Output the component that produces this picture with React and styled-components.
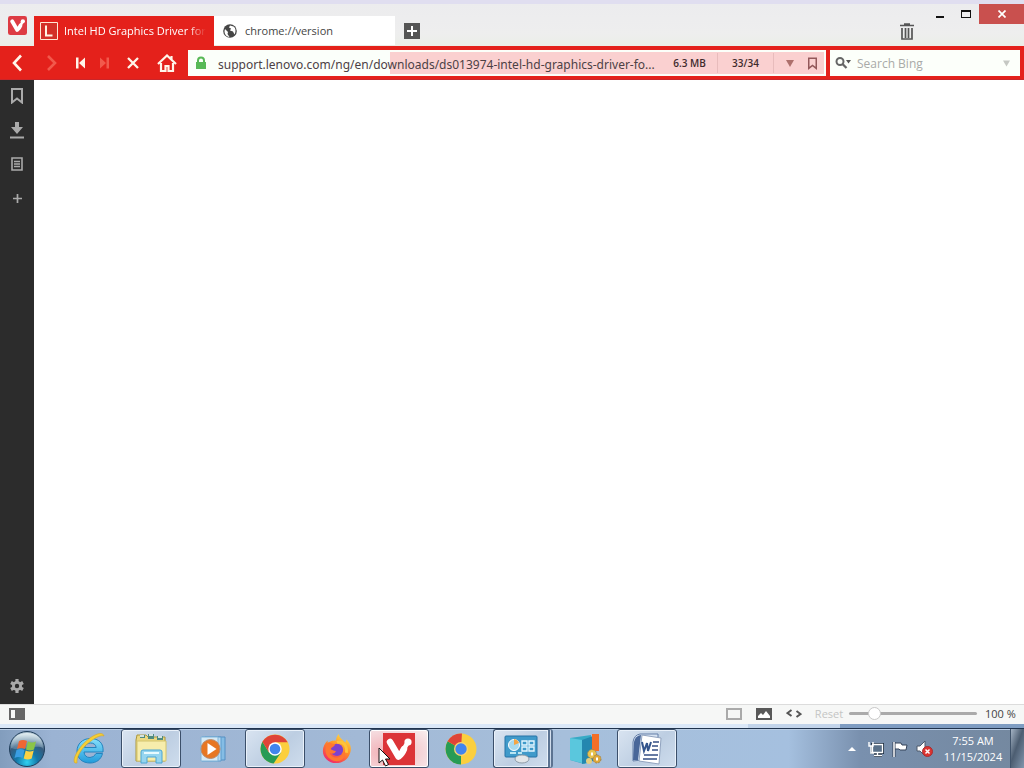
import React from "react";
import styled, { createGlobalStyle, css } from "styled-components";

const RED = "#e4211b";

const GlobalStyle = createGlobalStyle`
  *, *::before, *::after { box-sizing: border-box; }
  body { margin: 0; font-family: "Open Sans", "Noto Sans", sans-serif; font-size: 12px; color: #333; }
  button, input { font: inherit; color: inherit; }
  button { border: 0; padding: 0; background: none; display: flex; align-items: center; justify-content: center; }
  svg { display: block; flex: none; }
`;

const Desktop = styled.div`
  display: flex;
  flex-direction: column;
  min-height: 100vh;
  background: #fff;
`;

const Header = styled.header`
  display: flex;
  height: 46px;
  border-top: 4px solid #e0def0;
  background: linear-gradient(#ececee, #eeeeee 70%, #ebeee8);
`;

const MenuButton = styled.button`
  width: 34px;
  height: 42px;
`;

const TabStrip = styled.div`
  display: flex;
  flex: 1;
  min-width: 0;
  padding-top: 12px;
`;

const Tab = styled.button`
  width: ${(p) => (p.$active ? 180 : 181)}px;
  height: ${(p) => (p.$active ? 30 : 29)}px;
  padding: 0 8px 0 ${(p) => (p.$active ? 6 : 9)}px;
  justify-content: flex-start;
  gap: ${(p) => (p.$active ? 6 : 8)}px;
  background: ${(p) => (p.$active ? RED : "#fff")};
  color: ${(p) => (p.$active ? "#fff" : "#444")};
`;

const TabTitle = styled.span`
  flex: 1;
  overflow: hidden;
  white-space: nowrap;
  text-align: left;
  font-size: 11px;
  line-height: 20px;
  ${(p) => p.$fade && css`
    font-weight: 500;
    mask-image: linear-gradient(90deg, #000 88%, transparent);
  `}
`;

const NewTab = styled.button`
  width: 34px;
  height: 30px;
`;

const WindowArea = styled.div`
  display: flex;
  align-items: flex-start;
`;

const TrashButton = styled.button`
  width: 32px;
  height: 30px;
  margin: 12px 4px 0 0;
`;

const WindowButton = styled.button`
  width: ${(p) => (p.$close ? 45 : 26)}px;
  height: 20px;
  background: ${(p) => (p.$close ? "#c9504e" : "transparent")};
`;

const AddressBar = styled.div`
  display: flex;
  height: 34px;
  padding: 4px 4px 4px 0;
  background: ${RED};
  box-shadow: inset 0 -1px #c9262a;
`;

const NavButton = styled.button`
  width: ${(p) => (p.$small ? 24 : 34)}px;
  height: 26px;
  color: ${(p) => (p.disabled ? "#f2594c" : "#fff5ea")};
`;

const UrlField = styled.div`
  position: relative;
  display: flex;
  flex: 1;
  align-items: center;
  min-width: 0;
  margin: 0 4px;
  padding: 0 3px 0 6px;
  background: #fbfffa;
`;

const LoadProgress = styled.div`
  position: absolute;
  top: 2px;
  right: 2px;
  bottom: 2px;
  background: #fad0d0;
`;

const FieldPart = styled.div`
  position: relative;
  display: flex;
  align-items: center;
  justify-content: center;
  width: ${(p) => p.$width}px;
  height: 20px;
  flex: none;
  font-size: 10px;
  font-weight: 600;
  color: #402a2c;
  border-left: 1px solid ${(p) => (p.$divided ? "#e8bcbc" : "transparent")};
`;

const UrlInput = styled.input`
  position: relative;
  flex: 1;
  min-width: 0;
  height: 26px;
  border: 0;
  padding: 2px 0 0 10px;
  background: transparent;
  font-family: "Noto Sans", sans-serif;
  font-size: 12px;
  color: #4c4145;
  outline: 0;
`;

const FieldButton = styled.button`
  position: relative;
  width: 22px;
  height: 26px;
  flex: none;
  color: #93585a;
`;

const SearchField = styled.div`
  display: flex;
  align-items: center;
  width: 190px;
  padding: 0 3px;
  background: #fcfffa;
`;

const SearchInput = styled.input`
  flex: 1;
  min-width: 0;
  height: 26px;
  border: 0;
  padding: 0 3px;
  background: transparent;
  outline: 0;
  &::placeholder { color: #a9aaa8; opacity: 1; }
`;

const Body = styled.div`
  display: flex;
  flex: 1;
`;

const SidePanel = styled.nav`
  display: flex;
  flex-direction: column;
  width: 34px;
  background: #2c2c2c;
  color: #aaa;
`;

const PanelButton = styled.button`
  width: 34px;
  height: 34px;
  padding-bottom: 2px;
  color: inherit;
  ${(p) => p.$last && css`margin-top: auto;`}
`;

const Page = styled.main`
  flex: 1;
  background: #fff;
`;

const StatusBar = styled.footer`
  display: flex;
  align-items: center;
  height: 20px;
  padding: 0 7px 2px 9px;
  border-top: 1px solid #dcdcdc;
  background: #f6f7f6;
  color: #666;
`;

const StatusGroup = styled.div`
  display: flex;
  align-items: center;
  gap: 14px;
  margin-left: auto;
`;

const ResetButton = styled.button`
  width: 28px;
  margin-left: 13px;
  font-size: 11px;
  color: #c4c5c4;
`;

const Zoom = styled.input`
  appearance: none;
  width: 128px;
  height: 14px;
  margin: 0 8px 0 6px;
  background: transparent;
  &::-webkit-slider-runnable-track { height: 3px; border-radius: 2px; background: #aaa; }
  &::-webkit-slider-thumb {
    appearance: none;
    width: 13px;
    height: 13px;
    margin-top: -5px;
    border: 1px solid #c8c8c8;
    border-radius: 50%;
    background: #fff;
  }
`;

const ZoomValue = styled.output`
  width: 32px;
  font-size: 11px;
  white-space: nowrap;
  color: #444;
`;

const WindowEdge = styled.div`
  height: 4px;
  background: linear-gradient(90deg, #dbe8f8 0 73%, #c2d4ea 73% 82%, #7f9dc2 82%);
`;

const Taskbar = styled.div`
  display: flex;
  height: 40px;
  border-top: 1px solid #20344e;
  background: linear-gradient(90deg, #829dbd, #9bb3d3 5%, #a2b9d6 35%, #a6bfdb 55%, #a5c0df 77%, #7990ae 84%, #74889f);
  box-shadow: inset 0 1px #b9cde4;
`;

const StartButton = styled.button`
  width: 54px;
  height: 39px;
`;

const TaskList = styled.div`
  display: flex;
  flex: 1;
  gap: 2px;
  padding-left: 5px;
`;

const openTask = css`
  border: 1px solid #3b4f6a;
  border-radius: 3px;
  background: linear-gradient(135deg, #d9e4f1, #bdcee2 55%, #cfdded);
  box-shadow: inset 0 0 0 1px #e9f1fa;
`;

const TaskButton = styled.button`
  position: relative;
  width: 60px;
  height: 39px;
  ${(p) => p.$open && openTask}
  ${(p) => p.$current && css`
    background: radial-gradient(ellipse at 30% 60%, #f2aeb4, #f5dcdf 70%, #faf0f0);
    box-shadow: inset 0 0 0 1px #fff;
  `}
  ${(p) => p.$stacked && css`
    border-right: 5px double #5b7391;
  `}
`;

const Cursor = styled.svg`
  position: absolute;
  left: 8px;
  top: 17px;
`;

const Tray = styled.div`
  display: flex;
  align-items: center;
`;

const TrayButton = styled.button`
  width: 24px;
  height: 39px;
`;

const Clock = styled.time`
  width: 74px;
  text-align: center;
  font-size: 11px;
  line-height: 16px;
  color: #fff;
`;

const ShowDesktop = styled.button`
  width: 14px;
  height: 39px;
  border-left: 1px solid #40536a;
  background: linear-gradient(110deg, #a5b4c5, #4c5d71 45%, #8296ad);
`;

const VivaldiMark = ({ size, square }) => (
  <svg width={size} height={size} viewBox="0 0 32 32">
    <rect width="32" height="32" rx={square ? 0 : 4} fill={square ? "#dc3438" : "#dd3b43"} />
    <path d="M7 9 L15.5 23.5 Q19 21 21 16" fill="none" stroke="#fff" strokeWidth="6.5" strokeLinecap="round" strokeLinejoin="round" />
    <path d="M21 16 Q22.5 13 25 9" fill="none" stroke="#fff" strokeWidth="4.5" />
    <circle cx="25" cy="9" r="3.6" fill="#fff" />
  </svg>
);

const Triangle = ({ color, width = 8 }) => (
  <svg width={width} height="7" viewBox="0 0 8 7"><path d="M0 0h8L4 7z" fill={color} /></svg>
);

const BookmarkIcon = ({ width = 12, height = 16 }) => (
  <svg width={width} height={height} viewBox="0 0 12 16">
    <path d="M1 1h10v13.5L6 10.5 1 14.5z" fill="none" stroke="currentColor" strokeWidth="2" />
  </svg>
);

const SkipIcon = ({ forward }) => (
  <svg width="9" height="12" viewBox="0 0 9 12">
    <path d={forward ? "M0 0.5L6 6 0 11.5zM6.5 0.5H9v11H6.5z" : "M9 0.5L3 6l6 5.5zM0 0.5h2.5v11H0z"} fill="currentColor" />
  </svg>
);

const ChevronIcon = ({ forward }) => (
  <svg width="11" height="18" viewBox="0 0 11 18">
    <path d={forward ? "M2 2l7 7-7 7" : "M9 1.5L2 9l7 7.5"} fill="none" stroke="currentColor" strokeWidth="2.6" />
  </svg>
);

const StartOrb = () => (
  <svg width="38" height="38" viewBox="0 0 38 38">
    <defs>
      <radialGradient id="orb" cx="50%" cy="88%" r="80%">
        <stop offset="0" stopColor="#31d1f1" /><stop offset=".38" stopColor="#1378a9" />
        <stop offset=".72" stopColor="#375b7d" /><stop offset="1" stopColor="#a8bdcc" />
      </radialGradient>
      <linearGradient id="orbShine" x2="0" y2="1">
        <stop offset="0" stopColor="#e9f3f5" stopOpacity=".9" /><stop offset="1" stopColor="#9abacd" stopOpacity=".3" />
      </linearGradient>
    </defs>
    <circle cx="19" cy="19" r="17.5" fill="url(#orb)" stroke="#203e5b" />
    <path d="M3 18C3 8 10 3 19 3s16 5 16 15c-9-4-21 4-32 0z" fill="url(#orbShine)" />
    <path d="M11 11q4-2 8 0l-2 8q-4-2-8 0z" fill="#ef6634" />
    <path d="M20 11.5q4 2 8 0l-2 8q-4 2-8 0z" fill="#8bc548" />
    <path d="M8.5 20q4-2 8 0l-2 8q-4-2-8 0z" fill="#3a9ee2" />
    <path d="M17.7 20.5q4 2 8 0l-2 8q-4 2-8 0z" fill="#fbd144" />
  </svg>
);

const ExplorerE = () => (
  <svg width="34" height="34" viewBox="0 0 34 34">
    <defs><linearGradient id="ie" x2="0" y2="1"><stop stopColor="#86e0fb" /><stop offset="1" stopColor="#219bdb" /></linearGradient></defs>
    <path d="M30.500 21.500H24q-2 4-6 4-5.500 0-6-5.500h19C32 11 26.500 6.500 18.500 6.500 10.500 6.500 5 12 5 19c0 7.500 5.500 12 13 12 6.500 0 11-3.500 12.500-9.500zM12.500 15.500c.7-3 3-4.500 6-4.500 3.200 0 5.200 1.500 5.700 4.500z" fill="url(#ie)" stroke="#2384bf" />
    <path d="M3 31C-1 27 9 12 18 6c7-5 13-6 14-2-3-1-8 1-13 5C10 15 4 25 5 31z" fill="#f5cf35" stroke="#d7a425" strokeWidth=".6" />
  </svg>
);

const FolderIcon = () => (
  <svg width="34" height="34" viewBox="0 0 34 34">
    <path d="M2 8l1-5h9l2 2h17v24H2z" fill="#ebd982" stroke="#aa963f" />
    <path d="M6 3h5v3H6zm8-1h6v5h-6zm9 2h6v4h-6z" fill="#4f8b80" />
    <path d="M6 4h4m5-1h4m5 2h4" stroke="#fff" strokeWidth="1.5" />
    <path d="M3 9h29v20H3z" fill="#f7edac" stroke="#d4c46c" />
    <path d="M7 31V20q0-2 2-2h17q2 0 2 2v11h-6v-6h-9v6z" fill="#95d5ef" stroke="#4aa5d4" />
    <path d="M10 21h15" stroke="#e7faff" strokeWidth="2" />
  </svg>
);

const MediaIcon = () => (
  <svg width="34" height="30" viewBox="0 0 34 30">
    <path d="M9 3h20v23H9z" fill="#85bde5" stroke="#548fc3" />
    <path d="M6 3h19v24H6z" fill="#b8daf1" stroke="#5d9bcc" />
    <path d="M5 3h17v24H5z" fill="#d5eaf6" stroke="#82b5d9" />
    <circle cx="14.5" cy="15" r="9.5" fill="#e77723" stroke="#b98b6e" />
    <path d="M11.5 9l9 6-9 6z" fill="#fff" />
  </svg>
);

const ChromeIcon = () => (
  <svg width="30" height="30" viewBox="0 0 32 32">
    <circle cx="16" cy="16" r="15.500" fill="#fbcf3e" />
    <path d="M2.600 8.300A15.500 15.500 0 0 0 14.500 31.400L22.500 19.500 9.500 19.500z" fill="#279b55" />
    <path d="M16 16L9.500 19.500 2.600 8.300A15.500 15.500 0 0 1 29.500 8.700H16z" fill="#df4438" />
    <circle cx="16" cy="16" r="7.2" fill="#fff" />
    <circle cx="16" cy="16" r="5.7" fill="#4285ee" />
  </svg>
);

const CanaryIcon = () => (
  <svg width="32" height="32" viewBox="0 0 32 32">
    <circle cx="16" cy="16" r="15.500" fill="#fbcf3e" />
    <path d="M16 16V31.500A15.500 15.500 0 0 1 2.600 8.300z" fill="#279b55" />
    <path d="M16 16L2.600 8.300A15.500 15.500 0 0 1 17 .5z" fill="#df4438" />
    <circle cx="16" cy="16" r="7" fill="#fbd56b" />
    <circle cx="16" cy="16" r="5.700" fill="#4285ee" />
  </svg>
);

const FirefoxIcon = () => (
  <svg width="32" height="32" viewBox="0 0 34 34">
    <defs><linearGradient id="fox" x1=".8" y1="0" x2=".25" y2="1"><stop stopColor="#ffe34a" /><stop offset=".48" stopColor="#ff8b24" /><stop offset="1" stopColor="#f1266c" /></linearGradient></defs>
    <path d="M19 1c0 4 4 6 7 9l1-3c4 4 6 9 4 14-2 7-8 11-15 11C8 32 2 26 2 19c0-4 2-8 5-11v3c3-3 7-3 9-3 0-3 1-5 3-7z" fill="url(#fox)" />
    <circle cx="17" cy="18" r="6.5" fill="#7d42ce" />
    <path d="M7 10c4 0 5 2 8 2-1 3-4 3-5 5 2 1 3 2 6 2-2 4-5 3-7 2 3 8 15 6 16-3 3 10-7 15-15 10C3 23 4 15 7 10z" fill="#ff7730" />
    <path d="M17 10c7-2 11 4 10 11" fill="none" stroke="#ffc43a" strokeWidth="3" />
  </svg>
);

const ControlPanelIcon = () => (
  <svg width="34" height="32" viewBox="0 0 34 32">
    <rect x="1" y="3" width="32" height="21" rx="1" fill="#3f9aca" stroke="#2672a6" />
    <circle cx="10" cy="12" r="5.5" fill="#a7d9ed" stroke="#fff" />
    <path d="M10 12V6a6 6 0 0 1 5 4z" fill="#f4a543" />
    <path d="M18 8h5v4h-5zm7 0h5v4h-5zm-7 6h5v4h-5zm7 0h5v4h-5z" fill="none" stroke="#e3f6ff" strokeWidth="1.4" />
    <path d="M6 20h6m2 0h4" stroke="#b9e5f3" strokeWidth="2" />
    <ellipse cx="18" cy="26" rx="7" ry="4" fill="#e3e6e9" stroke="#8f9ca8" />
  </svg>
);

const ProgramsIcon = () => (
  <svg width="34" height="32" viewBox="0 0 34 32">
    <path d="M2 5l21-3v27l-7 2L2 27z" fill="#38aac5" />
    <path d="M2 5l12 2v23L2 27z" fill="#5ac7dd" />
    <path d="M14 7l11-4v25l-11 3z" fill="#2487af" />
    <path d="M24 1h7v17h-7z" fill="#f36f27" />
    <circle cx="24" cy="21" r="4.5" fill="#e9c34d" stroke="#8f8458" strokeDasharray="2 1" />
    <circle cx="29" cy="26" r="4" fill="#dfa737" stroke="#9e8654" strokeDasharray="2 1" />
    <circle cx="21" cy="28" r="3" fill="#e3ce80" />
    <path d="M23 21h2m3 5h2" stroke="#fff" strokeWidth="3" />
  </svg>
);

const WordIcon = () => (
  <svg width="34" height="34" viewBox="0 0 34 34">
    <path d="M3 10Q4 3 10 2h18v24L3 29z" fill="#d8e4f3" stroke="#657fa8" />
    <path d="M4 10Q5 4 11 3L8 28H3z" fill="#496799" />
    <path d="M12 3l19 3-2 26-20-3z" fill="#fff" stroke="#91a3bf" />
    <path d="M12 10l2 9 3-8 1 8 3-9" fill="none" stroke="#33548c" strokeWidth="2" />
    <path d="M23 10h6m-7 4h6m-6 4h6m-14 5h14m-15 4h14" stroke="#344f84" strokeWidth="1.7" />
  </svg>
);

const TASKS = [
  { name: "Internet Explorer", icon: <ExplorerE /> },
  { name: "Windows Explorer", icon: <FolderIcon />, open: true },
  { name: "Media Player", icon: <MediaIcon /> },
  { name: "Chrome", icon: <ChromeIcon />, open: true },
  { name: "Firefox", icon: <FirefoxIcon /> },
  { name: "Vivaldi", icon: <VivaldiMark size={32} square />, open: true, current: true },
  { name: "Chrome Canary", icon: <CanaryIcon /> },
  { name: "Control Panel", icon: <ControlPanelIcon />, open: true, stacked: true },
  { name: "Programs", icon: <ProgramsIcon /> },
  { name: "Word", icon: <WordIcon />, open: true },
];

export default function App() {
  return (
    <Desktop>
      <GlobalStyle />
      <Header>
        <MenuButton aria-label="Vivaldi menu"><VivaldiMark size={19} /></MenuButton>
        <TabStrip>
          <Tab $active>
            <svg width="18" height="18" viewBox="0 0 18 18">
              <path d="M.5.5h17v17H.5z" fill="#d33128" stroke="#ffe8d4" />
              <path d="M6 3.5v10h6.5" fill="none" stroke="#fff5e4" strokeWidth="2" />
            </svg>
            <TabTitle $fade>Intel HD Graphics Driver for</TabTitle>
          </Tab>
          <Tab>
            <svg width="14" height="14" viewBox="0 0 14 14">
              <circle cx="7" cy="7" r="6.8" fill="#454545" />
              <path d="M2 5l3 3-.5 2 2 3C3 12.500 1.500 10 1.500 7zM7 1.500L6 3.500l2 1-1 2 3 1 1.500 3C13 8 13 4 10.500 2.500z" fill="#fff" />
            </svg>
            <TabTitle>chrome://version</TabTitle>
          </Tab>
          <NewTab aria-label="New tab">
            <svg width="16" height="16" viewBox="0 0 16 16"><path d="M0 0h16v16H0z" fill="#555" /><path d="M8 3v10M3 8h10" stroke="#fff" strokeWidth="2" /></svg>
          </NewTab>
        </TabStrip>
        <WindowArea>
          <TrashButton aria-label="Closed tabs">
            <svg width="14" height="17" viewBox="0 0 14 17">
              <path d="M0 2.500h14M4 1h6M2 5v11h10V5M5.500 5v10M8.500 5v10" fill="none" stroke="#555" strokeWidth="1.700" />
            </svg>
          </TrashButton>
          <WindowButton aria-label="Minimize"><svg width="8" height="12"><path d="M0 8h8v2H0z" fill="#111" /></svg></WindowButton>
          <WindowButton aria-label="Maximize"><svg width="10" height="8"><path d="M0 0h10v8H0zM1 2v5h8V2z" fill="#111" fillRule="evenodd" /></svg></WindowButton>
          <WindowButton $close aria-label="Close"><svg width="8" height="8" viewBox="0 0 8 8"><path d="M.5.5l7 7m0-7l-7 7" stroke="#fff" strokeWidth="1.700" /></svg></WindowButton>
        </WindowArea>
      </Header>

      <AddressBar>
        <NavButton aria-label="Back"><ChevronIcon /></NavButton>
        <NavButton aria-label="Forward" disabled><ChevronIcon forward /></NavButton>
        <NavButton $small aria-label="Rewind"><SkipIcon /></NavButton>
        <NavButton $small aria-label="Fast forward" disabled><SkipIcon forward /></NavButton>
        <NavButton aria-label="Stop"><svg width="12" height="12" viewBox="0 0 12 12"><path d="M1 1l10 10m0-10L1 11" stroke="currentColor" strokeWidth="2.300" /></svg></NavButton>
        <NavButton aria-label="Home">
          <svg width="20" height="18" viewBox="0 0 20 18">
            <path d="M1 10l9-8.500 9 8.500M14.500 2v4" fill="none" stroke="currentColor" strokeWidth="2.200" />
            <path d="M4 9v8h4.500v-5h3v5H16V9" fill="none" stroke="currentColor" strokeWidth="2.200" />
          </svg>
        </NavButton>
        <UrlField>
          <LoadProgress style={{ width: "68%" }} />
          <svg width="14" height="14" viewBox="0 0 14 14">
            <path d="M2 6h10v7H2z" fill="#58b957" /><path d="M4 6V4.500a3 3 0 0 1 6 0V6" fill="none" stroke="#58b957" strokeWidth="2" />
          </svg>
          <UrlInput aria-label="Address" defaultValue="support.lenovo.com/ng/en/downloads/ds013974-intel-hd-graphics-driver-fo..." />
          <FieldPart $width={56}>6.3 MB</FieldPart>
          <FieldPart $width={56} $divided>33/34</FieldPart>
          <FieldPart $width={6} $divided />
          <FieldButton aria-label="Address history"><Triangle color="#ae706c" /></FieldButton>
          <FieldButton aria-label="Bookmark page"><BookmarkIcon width={9} height={13} /></FieldButton>
        </UrlField>
        <SearchField>
          <svg width="21" height="14" viewBox="0 0 21 14">
            <circle cx="7" cy="5.500" r="3.500" fill="none" stroke="#666" strokeWidth="2" /><path d="M9.500 8l4 4" stroke="#666" strokeWidth="2.300" /><path d="M13 4h5l-2.500 3.500z" fill="#555" />
          </svg>
          <SearchInput aria-label="Search" placeholder="Search Bing" />
          <FieldButton aria-label="Search history"><Triangle color="#c5c8c3" width={7} /></FieldButton>
        </SearchField>
      </AddressBar>

      <Body>
        <SidePanel aria-label="Panels">
          <PanelButton aria-label="Bookmarks"><BookmarkIcon /></PanelButton>
          <PanelButton aria-label="Downloads"><svg width="14" height="17" viewBox="0 0 14 17"><path d="M5 0h4v5h4l-6 7-6-7h4zM0 14.500h14v2H0z" fill="currentColor" /></svg></PanelButton>
          <PanelButton aria-label="Notes"><svg width="12" height="14" viewBox="0 0 12 14"><path d="M1 1h10v12H1zM3 4.500h6M3 7h6M3 9.500h6" fill="none" stroke="currentColor" strokeWidth="1.600" /></svg></PanelButton>
          <PanelButton aria-label="Add panel"><svg width="9" height="9" viewBox="0 0 9 9"><path d="M4.500 0v9M0 4.500h9" stroke="currentColor" strokeWidth="1.700" /></svg></PanelButton>
          <PanelButton $last aria-label="Settings">
            <svg width="14" height="14" viewBox="0 0 14 14">
              <g stroke="currentColor" strokeWidth="3.200"><path d="M7 0v14M1 3.500l12 7M1 10.500l12-7" /></g>
              <circle cx="7" cy="7" r="5" fill="currentColor" /><circle cx="7" cy="7" r="2.200" fill="#2c2c2c" />
            </svg>
          </PanelButton>
        </SidePanel>
        <Page />
      </Body>

      <StatusBar>
        <button aria-label="Toggle panel"><svg width="16" height="12"><path d="M0 0h16v12H0zM2 2v8h4V2z" fill="#666" fillRule="evenodd" /></svg></button>
        <StatusGroup>
          <button aria-label="Tile pages"><svg width="16" height="12"><path d="M1 1h14v10H1z" fill="none" stroke="#aaa" strokeWidth="2" /></svg></button>
          <button aria-label="Show images"><svg width="16" height="12"><path d="M0 0h16v12H0z" fill="#595959" /><path d="M2 10V8l3-3 2 2 3-4 4 5v2z" fill="#fff" /></svg></button>
          <button aria-label="Page actions"><svg width="16" height="10" viewBox="0 0 16 10"><path d="M5.500 1L1.500 4l4 3M10.500 2l4 3-4 3" fill="none" stroke="#555" strokeWidth="2" /></svg></button>
        </StatusGroup>
        <ResetButton>Reset</ResetButton>
        <Zoom type="range" aria-label="Page zoom" min="20" max="500" defaultValue="100" />
        <ZoomValue>100 %</ZoomValue>
      </StatusBar>
      <WindowEdge />

      <Taskbar>
        <StartButton aria-label="Start"><StartOrb /></StartButton>
        <TaskList>
          {TASKS.map((t) => (
            <TaskButton key={t.name} aria-label={t.name} $open={t.open} $current={t.current} $stacked={t.stacked}>
              {t.icon}
              {t.current && (
                <Cursor width="14" height="20" viewBox="0 0 14 20">
                  <path d="M1 1v15l3.500-3 3 6 3-1.500-3-5.500H12z" fill="#fff" stroke="#111" />
                </Cursor>
              )}
            </TaskButton>
          ))}
        </TaskList>
        <Tray>
          <TrayButton aria-label="Show hidden icons"><svg width="8" height="4"><path d="M0 4l4-4 4 4z" fill="#fff" /></svg></TrayButton>
          <TrayButton aria-label="Network">
            <svg width="16" height="16" viewBox="0 0 16 16">
              <path d="M4.500 3.500h10v8h-10zM9.500 11.500v3M6 14.500h8" fill="#597089" stroke="#1d2d40" strokeWidth="3" />
              <path d="M4.500 3.500h10v8h-10zM9.500 11.500v3M6 14.500h8" fill="#597089" stroke="#fff" strokeWidth="1.300" />
              <path d="M1 1v4h4V1M3 5v7h3" fill="none" stroke="#fff" strokeWidth="1.400" />
            </svg>
          </TrayButton>
          <TrayButton aria-label="Action Center">
            <svg width="16" height="16" viewBox="0 0 16 16"><path d="M2 1v15" stroke="#2d3b50" strokeWidth="3" /><path d="M3 2h6l1 2h5l-1 5H8L7 8H3z" fill="#fff" stroke="#344359" /><path d="M2 1v15" stroke="#fff" strokeWidth="1.500" /></svg>
          </TrayButton>
          <TrayButton aria-label="Volume muted">
            <svg width="17" height="16" viewBox="0 0 17 16"><path d="M1 5h3l5-5v15l-5-5H1z" fill="#fff" stroke="#4c596b" /><circle cx="11.500" cy="10.500" r="5" fill="#dc3430" stroke="#a82d31" /><path d="M9.500 8.500l4 4m0-4l-4 4" stroke="#fff" strokeWidth="1.500" /></svg>
          </TrayButton>
          <Clock>7:55 AM<br />11/15/2024</Clock>
          <ShowDesktop aria-label="Show desktop" />
        </Tray>
      </Taskbar>
    </Desktop>
  );
}
